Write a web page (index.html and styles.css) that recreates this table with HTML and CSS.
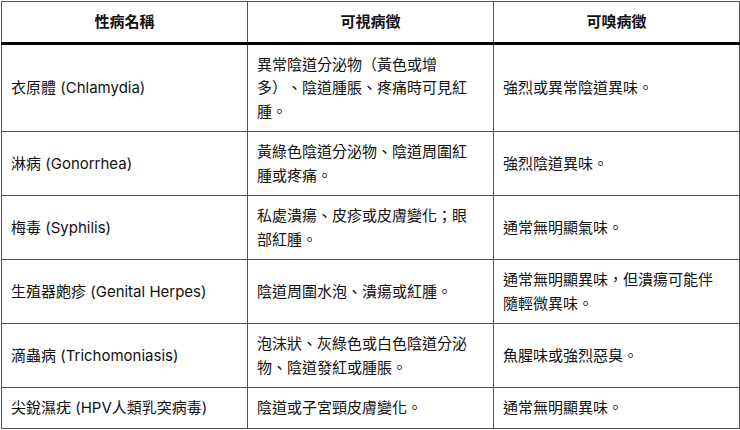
FILE: index.html
```html
<!DOCTYPE html>
<html lang="zh-Hant">
<head>
<meta charset="utf-8">
<link rel="stylesheet" href="styles.css">
</head>
<body>
<table class="std-table">
  <colgroup><col class="c"><col class="c"><col class="c"></colgroup>
  <thead>
    <tr><th>性病名稱</th><th>可視病徵</th><th>可嗅病徵</th></tr>
  </thead>
  <tbody>
    <tr><td>衣原體 (Chlamydia)</td><td>異常陰道分泌物（黃色或增多）、陰道腫脹、疼痛時可見紅腫。</td><td>強烈或異常陰道異味。</td></tr>
    <tr><td>淋病 (Gonorrhea)</td><td>黃綠色陰道分泌物、陰道周圍紅腫或疼痛。</td><td>強烈陰道異味。</td></tr>
    <tr><td>梅毒 (Syphilis)</td><td>私處潰瘍、皮疹或皮膚變化；眼部紅腫。</td><td>通常無明顯氣味。</td></tr>
    <tr><td>生殖器皰疹 (Genital Herpes)</td><td>陰道周圍水泡、潰瘍或紅腫。</td><td>通常無明顯異味，但潰瘍可能伴隨輕微異味。</td></tr>
    <tr><td>滴蟲病 (Trichomoniasis)</td><td>泡沫狀、灰綠色或白色陰道分泌物、陰道發紅或腫脹。</td><td>魚腥味或強烈惡臭。</td></tr>
    <tr><td>尖銳濕疣 (HPV人類乳突病毒)</td><td>陰道或子宮頸皮膚變化。</td><td>通常無明顯異味。</td></tr>
  </tbody>
</table>
</body>
</html>
```
FILE: styles.css
```css
html, body {
  margin: 0;
  padding: 0;
  background: #fff;
}
body {
  font-family: "Inter", "Noto Sans CJK TC", sans-serif;
  font-size: 15px;
  color: #111;
}
.std-table {
  border-collapse: collapse;
  table-layout: fixed;
  width: 738px;
  margin: 1px 0 0 1px;
}
.std-table .c {
  width: 246px;
}
.std-table th,
.std-table td {
  border: 1px solid #555;
  vertical-align: middle;
  text-align: left;
  line-height: 23.5px;
  padding: 8px 14px 8px 9px;
  word-break: normal;
  line-break: strict;
  text-spacing-trim: space-all;
}
.std-table th {
  text-align: center;
  font-weight: 700;
  padding: 8px 9px;
  border-bottom: 3px solid #000;
}
```
